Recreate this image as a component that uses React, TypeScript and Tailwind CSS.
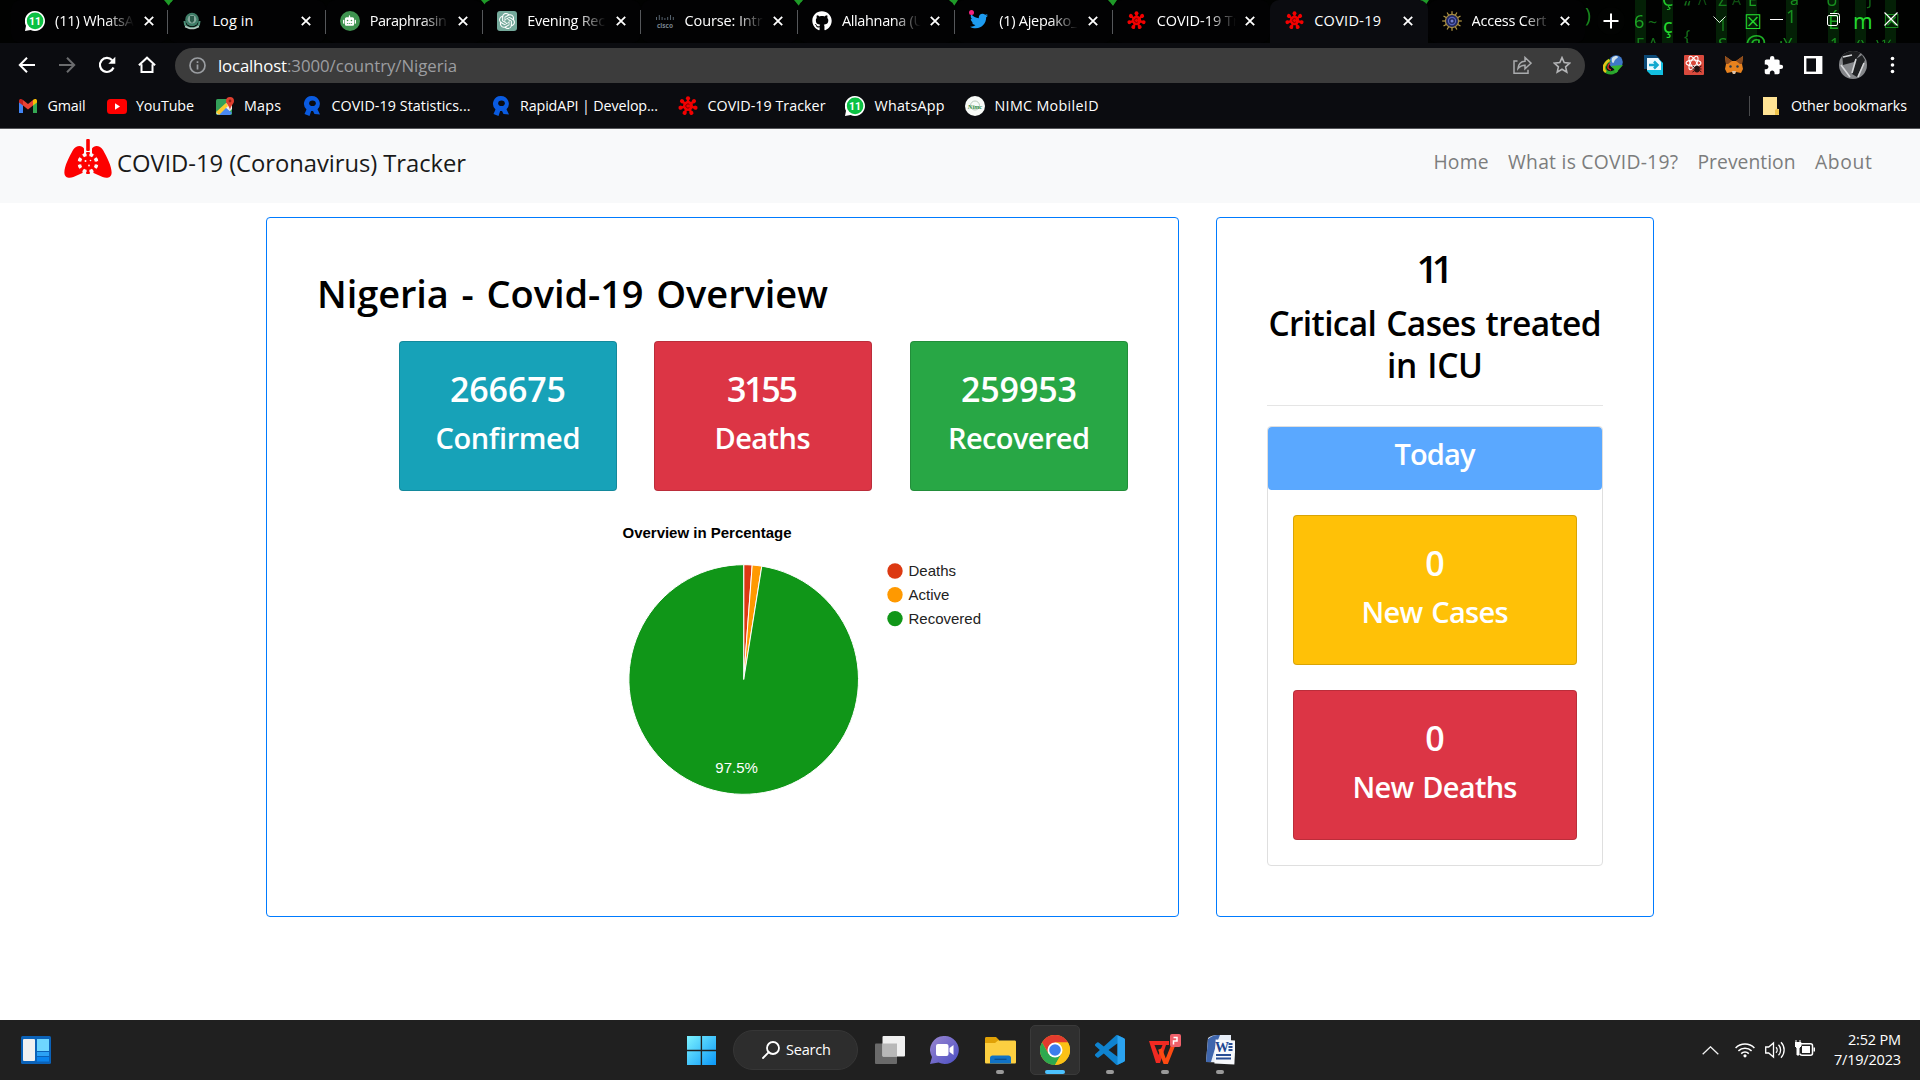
import { useLayoutEffect, useRef, useState } from "react";
import type { ReactNode } from "react";
import { FaGithub, FaTwitter, FaRobot } from "react-icons/fa";
import { SiOpenai } from "react-icons/si";
import { MdExtension } from "react-icons/md";

const UI = "font-['Open_Sans','Noto_Sans',sans-serif]";

/** Spaces its letters so that the text takes exactly `w` pixels. */
function Fit({ w, children }: { w: number; children: string }) {
  const ref = useRef<HTMLSpanElement>(null);
  const [ls, setLs] = useState(0);
  useLayoutEffect(() => {
    const el = ref.current;
    if (el && children.length > 1) {
      setLs((w - el.getBoundingClientRect().width) / (children.length - 1));
    }
  }, [w, children]);
  return (
    <span ref={ref} className="inline-block whitespace-nowrap" style={{ letterSpacing: ls, marginRight: -ls }}>
      {children}
    </span>
  );
}

/* ---------- icons ---------- */

function Virus({ size = 19 }: { size?: number }) {
  const arms = [0, 51, 103, 154, 206, 257, 309];
  return (
    <svg width={size} height={size} viewBox="-12 -12 24 24">
      {arms.map((a) => (
        <g key={a} transform={`rotate(${a})`}>
          <rect x="-1.4" y="-9" width="2.8" height="7" fill="#f20000" />
          <circle cx="0" cy="-9.2" r="2.5" fill="#f20000" />
        </g>
      ))}
      <circle r="6" fill="#f20000" />
      <path d="M1.8-1.6A2.5 2.5 0 1 0 1.800 1.600" fill="none" stroke="#6a0000" strokeWidth="1.1" />
    </svg>
  );
}

function WhatsBadge() {
  return (
    <svg width="20" height="20" viewBox="0 0 20 20">
      <path d="M10 0a10 10 0 1 1-4.4 19L0 20l1-5.300A10 10 0 0 1 10 0z" fill="#fff" />
      <circle cx="10.100" cy="9.900" r="8.300" fill="#0bc143" />
      <text x="10" y="13.800" textAnchor="middle" fontSize="10.500" fontWeight="700" fill="#fff" fontFamily="Roboto, sans-serif">11</text>
    </svg>
  );
}

function Crest() {
  return (
    <svg width="18" height="18" viewBox="0 0 18 18">
      <circle cx="9" cy="7.500" r="6.800" fill="#3f7d68" />
      <circle cx="9" cy="7.300" r="4.300" fill="#86a99d" />
      <path d="M7 4h4v5l-2 2-2-2z" fill="#2b5a4a" />
      <path d="M1.500 9c0 5 3 7 7.500 7s7.500-2 7.500-7" fill="none" stroke="#4d8f78" strokeWidth="2" />
      <path d="M2 14.500l5 2h4l5-2" fill="none" stroke="#b6c8c0" strokeWidth="1.500" />
    </svg>
  );
}

function Cisco() {
  const bars = [3, 5, 3, 2, 3, 5, 3];
  return (
    <svg width="20" height="16" viewBox="0 0 20 16">
      {bars.map((h, i) => (
        <rect key={i} x={1 + i * 2.8} y={7 - h} width="1" height={h} fill="#56636e" />
      ))}
      <text x="10" y="14.500" textAnchor="middle" fontSize="6.500" fontWeight="700" fill="#76828b" fontFamily="Open Sans, sans-serif">cisco</text>
    </svg>
  );
}

function Seal() {
  return (
    <svg width="20" height="20" viewBox="-10 -10 20 20">
      {[0, 30, 60, 90, 120, 150, 180, 210, 240, 270, 300, 330].map((a) => (
        <rect key={a} x="-.6" y="-9.800" width="1.200" height="4" fill="#b89a45" transform={`rotate(${a})`} />
      ))}
      <circle r="6.600" fill="#20275f" stroke="#a58b45" strokeWidth="1.200" />
      <circle r="3.600" fill="none" stroke="#5964b8" strokeWidth="1.200" />
      <circle r="1.500" fill="#7781cd" />
    </svg>
  );
}

function Cross() {
  return (
    <svg width="10" height="10" viewBox="0 0 10 10" className="shrink-0">
      <path d="M.8.8l8.400 8.400M9.200.8L.8 9.200" stroke="#fff" strokeWidth="1.800" />
    </svg>
  );
}

function Rapid() {
  return (
    <svg width="18" height="20" viewBox="0 0 18 20">
      <path d="M9 0a7.800 7.800 0 0 1 5.500 13.300L17 18.500l-5.500-.5-1.500-3H8.200L6.500 20 1.500 18l2-4.500A7.800 7.800 0 0 1 9 0z" fill="#0a5be0" />
      <ellipse cx="9.500" cy="7.300" rx="3.300" ry="2.800" fill="#0b0c10" />
    </svg>
  );
}

function Lungs() {
  return (
    <svg width="48" height="39" viewBox="0 0 48 39">
      <rect x="22.200" y="0" width="3.600" height="12" rx="1" fill="#fd0000" />
      <path d="M20 9.500C18 6 12 6 9 11 5 18 0 28 .4 34c.3 5 5 5.500 9 4l9-4 1.600-4z" fill="#fd0000" />
      <path d="M28 9.500C30 6 36 6 39 11c4 7 9 17 8.600 23-.3 5-5 5.500-9 4l-9-4-1.600-4z" fill="#fd0000" />
      <circle cx="24" cy="24" r="10.500" fill="#f8f9fa" />
      <rect x="20" y="33" width="8" height="4" fill="#f8f9fa" />
      {[0, 45, 90, 135, 180, 225, 270, 315].map((a) => (
        <g key={a} transform={`rotate(${a} 24 24)`}>
          <rect x="22.600" y="14" width="2.800" height="6" fill="#fd0000" />
          <rect x="22" y="13" width="4" height="2" rx="1" fill="#fd0000" />
        </g>
      ))}
      <circle cx="24" cy="24" r="7" fill="#fd0000" />
      <circle cx="21.500" cy="22" r="1" fill="#f8f9fa" />
      <circle cx="26.500" cy="21.500" r=".8" fill="#f8f9fa" />
      <circle cx="25" cy="26.500" r=".9" fill="#f8f9fa" />
    </svg>
  );
}

/* ---------- browser chrome ---------- */

const tabs: { icon: ReactNode; title: string; w: number; fade?: boolean; active?: boolean; sep?: boolean }[] = [
  { icon: <WhatsBadge />, title: "(11) WhatsA", w: 79, fade: true, sep: true },
  { icon: <Crest />, title: "Log in", w: 41, sep: true },
  {
    icon: (
      <span className="flex h-[20px] w-[20px] items-center justify-center rounded-full bg-[#3f9350]">
        <FaRobot size={13} color="#fff" />
      </span>
    ),
    title: "Paraphrasin",
    w: 77,
    fade: true,
    sep: true,
  },
  {
    icon: (
      <span className="flex h-[20px] w-[20px] items-center justify-center rounded-[3px] bg-[#74a99b]">
        <SiOpenai size={16} color="#fff" />
      </span>
    ),
    title: "Evening Rec",
    w: 78,
    fade: true,
    sep: true,
  },
  { icon: <Cisco />, title: "Course: Intr", w: 78, fade: true, sep: true },
  { icon: <FaGithub size={20} color="#fff" />, title: "Allahnana (U", w: 82, fade: true, sep: true },
  {
    icon: (
      <span className="relative flex">
        <FaTwitter size={18} color="#1d9bf0" />
        <span className="absolute -left-px -top-[2px] h-[5px] w-[5px] rounded-full bg-[#f4227e]" />
      </span>
    ),
    title: "(1) Ajepako_",
    w: 78,
    fade: true,
    sep: true,
  },
  { icon: <Virus />, title: "COVID-19 Tr", w: 82, fade: true },
  { icon: <Virus />, title: "COVID-19", w: 67, active: true },
  { icon: <Seal />, title: "Access Cert", w: 75, fade: true },
];

/* x, baseline, size, glyph, opacity */
const rain: [number, number, number, string, number][] = [
  [1585, 22, 20, ")", 0.6],
  [1634, 28, 18, "6", 0.7],
  [1648, 28, 16, "~", 0.5],
  [1663, 33, 20, "ç", 1],
  [1636, 50, 16, "Γ", 0.5],
  [1648, 50, 17, "Λ", 0.5],
  [1662, 6, 18, "Ç", 0.9],
  [1684, 14, 18, "“", 0.5],
  [1684, 42, 16, "{", 0.5],
  [1698, 5, 14, "Λ", 0.35],
  [1718, 6, 16, "Z", 0.5],
  [1718, 31, 16, "1", 0.5],
  [1718, 50, 17, "S", 0.6],
  [1732, 5, 14, "A", 0.35],
  [1748, 6, 16, "E", 0.7],
  [1744, 29, 20, "☒", 1],
  [1745, 52, 24, "@", 0.8],
  [1786, 23, 18, "1", 0.6],
  [1779, 50, 16, ":Y", 0.6],
  [1790, 5, 16, "ä", 0.6],
  [1826, 6, 16, "U", 0.6],
  [1828, 29, 20, "É", 0.7],
  [1830, 50, 16, "1", 0.6],
  [1853, 29, 21, "m", 1],
  [1856, 50, 15, "()", 0.6],
  [1868, 5, 14, "J", 0.5],
  [1883, 28, 19, "☒", 0.6],
  [1876, 50, 15, "\\¼", 0.6],
];

function MatrixBackdrop() {
  return (
    <svg className="absolute inset-0" width="1920" height="43" viewBox="0 0 1920 43">
      <rect width="1920" height="43" fill="#010201" />
      {[1635, 1662, 1716, 1746, 1786, 1828, 1855, 1885].map((x) => (
        <rect key={x} x={x} width="11" height="43" fill="#0b5a12" opacity=".35" />
      ))}
      {[168, 485, 798, 953, 1112, 1424].map((x) => (
        <path key={x} d={`M${x - 4} 0h9l-4 6z`} fill="#1f9a28" />
      ))}
      {rain.map(([x, y, s, t, o], i) => (
        <text key={i} x={x} y={y} fontSize={s} fill="#25d92f" opacity={o} fontFamily="Noto Sans, DejaVu Sans, sans-serif">
          {t}
        </text>
      ))}
    </svg>
  );
}

function TabStrip() {
  return (
    <div className="relative h-[43px] overflow-hidden">
      <MatrixBackdrop />
      <div className="relative flex h-full pl-[11px]">
        {tabs.map((t, i) => (
          <div
            key={i}
            className={
              t.active
                ? "relative flex h-full w-[157.4px] items-center rounded-t-[9px] bg-[#0b0c10] pb-[2px] pl-[14px]"
                : "relative flex h-full w-[157.4px] items-center rounded-[9px] bg-[#020203] pb-[2px] pl-[14px]"
            }
          >
            <span className="flex w-[20px] shrink-0 items-center justify-center">{t.icon}</span>
            <span
              className={
                t.fade
                  ? "ml-[10px] w-[79px] shrink-0 overflow-hidden text-[14.5px] leading-[22px] text-white [mask-image:linear-gradient(to_right,#000_65%,transparent_100%)]"
                  : "ml-[10px] w-[79px] shrink-0 overflow-hidden text-[14.5px] leading-[22px] text-white"
              }
            >
              <Fit w={t.w}>{t.title}</Fit>
            </span>
            <span className="ml-[9.500px] flex"><Cross /></span>
            {t.sep && <span className="absolute right-0 top-[10px] h-[24px] w-px bg-[#55575a]" />}
          </div>
        ))}
        <div className="ml-[12px] mt-[7px] flex h-[28px] w-[28px] items-center justify-center rounded-full bg-[#020302]">
          <svg width="16" height="16" viewBox="0 0 16 16"><path d="M8 .5v15M.5 8h15" stroke="#fff" strokeWidth="2" /></svg>
        </div>
        <div className="ml-auto flex h-[38px] items-center gap-[44px] pr-[22px]">
          <svg width="13" height="13" viewBox="0 0 13 13"><path d="M.5 3.500l6 6 6-6" fill="none" stroke="#dfe8df" /></svg>
          <svg width="13" height="13" viewBox="0 0 13 13"><path d="M0 6.500h13" stroke="#fff" /></svg>
          <svg width="13" height="13" viewBox="0 0 13 13" fill="none" stroke="#fff">
            <rect x=".5" y="2.500" width="10" height="10" rx="1.500" />
            <path d="M3 .5h7.500a2 2 0 0 1 2 2V10" />
          </svg>
          <svg width="14" height="14" viewBox="0 0 14 14"><path d="M.5.5l13 13M13.500.5l-13 13" stroke="#fff" strokeWidth="1.200" /></svg>
        </div>
      </div>
    </div>
  );
}

function Toolbar() {
  return (
    <div className="flex h-[44px] items-center">
      <div className="flex w-[175px] shrink-0 items-center gap-[22px] pl-[18px]">
        <svg width="18" height="18" viewBox="0 0 18 18" fill="none" stroke="#fff" strokeWidth="2"><path d="M17 9H2M9 1.800L1.800 9 9 16.200" /></svg>
        <svg width="18" height="18" viewBox="0 0 18 18" fill="none" stroke="#6b6c6e" strokeWidth="2"><path d="M1 9h15M9 1.800L16.200 9 9 16.200" /></svg>
        <svg width="18" height="18" viewBox="0 0 18 18" fill="none" stroke="#fff" strokeWidth="2.200"><path d="M15.500 11.500A7 7 0 1 1 14.200 4.300" /><path d="M17.300.8v7h-7z" fill="#fff" stroke="none" /></svg>
        <svg width="18" height="18" viewBox="0 0 18 18" fill="none" stroke="#fff" strokeWidth="2"><path d="M3.500 8.200V16h11V8.200M.9 9.300L9 1.700l8.100 7.600" /></svg>
      </div>
      <div className="flex h-[35px] w-[1410px] shrink-0 items-center rounded-full bg-[#3c3c3c] pl-[14px] pr-[14px]">
        <svg width="17" height="17" viewBox="0 0 17 17" fill="none" stroke="#9a9da1" strokeWidth="1.700">
          <circle cx="8.500" cy="8.500" r="7.500" />
          <path d="M8.500 7.500v5M8.500 4.200v1.900" />
        </svg>
        <div className="ml-[12px] mt-px flex text-[16.800px] leading-[24px]">
          <span className="text-white"><Fit w={69}>localhost</Fit></span>
          <span className="text-[#9c9ea1]"><Fit w={170}>:3000/country/Nigeria</Fit></span>
        </div>
        <div className="ml-auto flex items-center gap-[21px]">
          <svg width="19" height="18" viewBox="0 0 19 18" fill="none" stroke="#a9abad" strokeWidth="1.500">
            <path d="M4.500 5H1v12.200h14v-3.500" />
            <path d="M5 12.500c.5-5 3-7 7-7.200V1.500L18 7.200l-6 5.600V9.200c-3 0-5 .8-7 3.300z" />
          </svg>
          <svg width="18" height="18" viewBox="0 0 18 18" fill="none" stroke="#b4b5b7" strokeWidth="1.600">
            <path d="M9 1.600l2.200 5 5.500.5-4.100 3.700 1.200 5.400L9 13.300l-4.800 2.900 1.200-5.400L1.300 7.100l5.500-.5z" />
          </svg>
        </div>
      </div>
      <div className="ml-[18px] flex items-center gap-[20px]">
        <svg width="20" height="20" viewBox="0 0 20 20">
          <circle cx="13" cy="7" r="6.800" fill="#3f78c9" />
          <path d="M9 3c3-3 6-2 6-1s-3 2-4 5-3-1-2-4z" fill="#cfe0ea" />
          <path d="M7 5C2 8-1 14 4 17c4 2 8 0 10-2" fill="none" stroke="#2aa52c" strokeWidth="3.500" />
          <path d="M6.500 5C1 8-1 14 3 17" fill="none" stroke="#e8c216" strokeWidth="2.500" />
          <path d="M7 8c-3 3-3 6 1 7" fill="none" stroke="#d22b1f" strokeWidth="1.500" />
          <path d="M8 11l12-1-7 8-2-4z" fill="#35b531" />
        </svg>
        <svg className="ml-[1px]" width="20" height="20" viewBox="0 0 20 20">
          <path d="M0 0h12l4 4H6v10H0z" fill="#0b4a78" />
          <path d="M3 3h11l5 5v12H7l-4-4z" fill="#12bfe0" />
          <path d="M3 3h11l3 4v8H3z" fill="#eefaff" />
          <path d="M5 10h8M10 6.500l3.500 3.500-3.500 3.500" fill="none" stroke="#12a8cf" strokeWidth="2.500" />
        </svg>
        <svg width="20" height="20" viewBox="0 0 20 20">
          <rect width="20" height="20" rx="1" fill="#d94a3d" />
          <g fill="none" stroke="#fff" strokeWidth="1.100">
            <ellipse cx="9.500" cy="8" rx="7.500" ry="3" />
            <ellipse cx="9.500" cy="8" rx="7.500" ry="3" transform="rotate(60 9.500 8)" />
            <ellipse cx="9.500" cy="8" rx="7.500" ry="3" transform="rotate(120 9.500 8)" />
          </g>
          <ellipse cx="13" cy="14" rx="2.600" ry="3.600" fill="#221010" />
          <path d="M8.500 11l9 6M17.500 11l-9 6M8.500 14h9" stroke="#221010" />
        </svg>
        <svg width="20" height="20" viewBox="0 0 20 20">
          <path d="M1 1l7 5h4l7-5-1 8 1 5-2 4-5-1-1 2H9l-1-2-5 1-2-4 1-5z" fill="#e8821e" />
          <path d="M1 1l7 5-4 3-2 0zM19 1l-7 5 4 3 2 0z" fill="#8a4a1d" />
          <path d="M8 16h4l-1 3H9z" fill="#d8c2ae" />
          <circle cx="6.500" cy="11.500" r="1.200" fill="#2a3a4a" />
          <circle cx="13.500" cy="11.500" r="1.200" fill="#2a3a4a" />
        </svg>
        <MdExtension className="-ml-px" size={21} color="#fff" />
        <svg width="19" height="18" viewBox="0 0 19 18"><rect x="1.200" y="1.200" width="16" height="15.600" fill="none" stroke="#fff" strokeWidth="2.400" /><rect x="12" y="1" width="6" height="16" fill="#fff" /></svg>
        <svg className="-ml-[4px]" width="28" height="28" viewBox="0 0 28 28">
          <clipPath id="avatar"><circle cx="14" cy="14" r="14" /></clipPath>
          <g clipPath="url(#avatar)">
            <rect width="28" height="28" fill="#85878a" />
            <path d="M3 0h20l-8 11L4 14z" fill="#1c1d1f" />
            <path d="M17 8l6-4 3 5-8 17-5-3z" fill="#1f2123" />
            <path d="M4 6l9-2M2 14l9 12M17 8l-4 14M25 12l-6 14" stroke="#d4d6d8" strokeWidth="1.600" />
          </g>
        </svg>
        <svg className="ml-[3px]" width="5" height="18" viewBox="0 0 5 18" fill="#fff"><circle cx="2.500" cy="2.500" r="1.800" /><circle cx="2.500" cy="9" r="1.800" /><circle cx="2.500" cy="15.500" r="1.800" /></svg>
      </div>
    </div>
  );
}

const bookmarks: { icon: ReactNode; title: string; w: number; box: string }[] = [
  {
    icon: (
      <svg width="18" height="14" viewBox="0 0 18 14">
        <path d="M0 2v12h4V5z" fill="#4285f4" />
        <path d="M18 2v12h-4V5z" fill="#34a853" />
        <path d="M4 1l5 4 5-4v5.500l-5 4-5-4z" fill="#ea4335" />
        <path d="M0 1.500C0 0 2.500-.6 4 1v5.500L0 3.500z" fill="#c5221f" />
        <path d="M18 1.500C18 0 15.500-.6 14 1v5.500l4-3z" fill="#fbbc04" />
      </svg>
    ),
    title: "Gmail", w: 38, box: "w-[88.500px]",
  },
  {
    icon: (
      <svg width="20" height="15" viewBox="0 0 20 15"><rect width="20" height="15" rx="3.500" fill="#f00" /><path d="M8 4.300l5 3.200-5 3.200z" fill="#fff" /></svg>
    ),
    title: "YouTube", w: 58, box: "w-[108px]",
  },
  {
    icon: (
      <svg width="18" height="18" viewBox="0 0 18 18">
        <rect y="2" width="16" height="16" rx="1.500" fill="#34a05a" />
        <path d="M0 16L14 3h2v9l-6 6H2z" fill="#f1f1ea" />
        <path d="M9 10l-8 8h13l2-2z" fill="#4a89f3" />
        <path d="M0 15l10-9 2 3-9 9z" fill="#fbcb2f" />
        <path d="M14 0a4 4 0 0 1 4 4c0 3-3 4-4 9-1-5-4-6-4-9a4 4 0 0 1 4-4z" fill="#e0402f" />
        <circle cx="14" cy="4" r="1.400" fill="#8c1d14" />
      </svg>
    ),
    title: "Maps", w: 37, box: "w-[87.500px]",
  },
  { icon: <Rapid />, title: "COVID-19 Statistics...", w: 139, box: "w-[188.500px]" },
  { icon: <Rapid />, title: "RapidAPI | Develop...", w: 138, box: "w-[187.500px]" },
  { icon: <Virus size={20} />, title: "COVID-19 Tracker", w: 118, box: "w-[167px]" },
  { icon: <WhatsBadge />, title: "WhatsApp", w: 70, box: "w-[120px]" },
  {
    icon: (
      <svg width="20" height="20" viewBox="0 0 20 20">
        <circle cx="10" cy="10" r="10" fill="#f8fbf8" />
        <circle cx="10" cy="9.500" r="4.500" fill="none" stroke="#b9c9bb" />
        <text x="10" y="12.500" textAnchor="middle" fontSize="6.500" fontWeight="700" fontStyle="italic" fill="#2c8a45" fontFamily="Liberation Serif, serif">Nimc</text>
      </svg>
    ),
    title: "NIMC MobileID", w: 104, box: "w-[140px]",
  },
];

function BookmarksBar() {
  return (
    <div className="flex h-[40px] items-center pb-[2px] pl-[18px] pr-[13px] text-[14.300px] leading-[22px] text-white">
      {bookmarks.map((b) => (
        <div key={b.title} className={`${b.box} flex shrink-0 items-center`}>
          <span className="mr-[9.500px] flex w-[20px] justify-center">{b.icon}</span>
          <Fit w={b.w}>{b.title}</Fit>
        </div>
      ))}
      <div className="ml-auto flex items-center">
        <span className="h-[20px] w-px bg-[#4a4b4d]" />
        <svg className="ml-[13px] mr-[12px]" width="16" height="18" viewBox="0 0 16 18">
          <path d="M0 0h14v12h2v6H0z" fill="#ffe394" />
          <path d="M12 18v-5l2-1.500 2 1.500v4l-1 1z" fill="#f0c54c" />
        </svg>
        <Fit w={116}>Other bookmarks</Fit>
      </div>
    </div>
  );
}

/* ---------- page ---------- */

function Stat({ value, vw, label, lw, tone }: { value: string; vw: number; label: string; lw: number; tone: string }) {
  return (
    <div className={`${tone} h-[150px] rounded-[4px] border border-black/15 bg-clip-border pt-[26px] text-center font-semibold text-white`}>
      <div className="text-[34px] leading-[42px]"><Fit w={vw}>{value}</Fit></div>
      <div className="mt-[9px] text-[29px] leading-[37px] [word-spacing:2px]"><Fit w={lw}>{label}</Fit></div>
    </div>
  );
}

const slices = [
  { name: "Deaths", color: "#dc3912", share: 0.0118 },
  { name: "Active", color: "#ff9900", share: 0.0134 },
  { name: "Recovered", color: "#109618", share: 0.9748 },
];

function PieChart() {
  const cx = 143.7;
  const cy = 179.5;
  const r = 114.8;
  let turn = 0;
  const at = (t: number) => `${cx + r * Math.sin(2 * Math.PI * t)} ${cy - r * Math.cos(2 * Math.PI * t)}`;
  return (
    <svg width="420" height="320" viewBox="0 0 420 320" fontFamily="Liberation Sans, Arial, sans-serif" fontSize="15">
      <text x="22.500" y="38" fontWeight="700" fill="#000" textLength="169">Overview in Percentage</text>
      {slices.map((s) => {
        const start = turn;
        turn += s.share;
        return (
          <path
            key={s.name}
            d={`M${cx} ${cy}L${at(start)}A${r} ${r} 0 ${s.share > 0.5 ? 1 : 0} 1 ${at(turn)}Z`}
            fill={s.color}
            stroke="#fff"
          />
        );
      })}
      <text x="115.300" y="273" fill="#fff">97.5%</text>
      {slices.map((s, i) => (
        <g key={s.name}>
          <circle cx="295" cy={71 + i * 23.8} r="7.700" fill={s.color} />
          <text x="308.500" y={76 + i * 24} fill="#222">{s.name}</text>
        </g>
      ))}
    </svg>
  );
}

function Page() {
  return (
    <div className="h-[891px] bg-white">
      <nav className="flex h-[74px] items-start bg-[#f8f9fa] pl-[64px] pr-[48px] pt-[9.500px]">
        <Lungs />
        <div className="ml-[5px] mt-[6px] text-[23.800px] leading-[36px] text-[#1a1a1a]">
          <Fit w={349}>COVID-19 (Coronavirus) Tracker</Fit>
        </div>
        <div className="ml-auto mt-[8px] flex gap-[19.500px] text-[19.300px] font-medium leading-[30px] text-[#7c7d7d]">
          <Fit w={55}>Home</Fit>
          <Fit w={170}>What is COVID-19?</Fit>
          <Fit w={98}>Prevention</Fit>
          <Fit w={57}>About</Fit>
        </div>
      </nav>
      <main className="flex gap-[37px] pl-[266px] pt-[14px]">
        <section className="h-[700px] w-[913px] rounded-[4px] border border-[#007bff] pt-[51px]">
          <h1 className="ml-[50px] text-[38px] font-semibold leading-[48px] text-black [word-spacing:3px]">
            <Fit w={511}>Nigeria - Covid-19 Overview</Fit>
          </h1>
          <div className="ml-[132px] mt-[24px] grid w-[729px] grid-cols-[218px_218px_218px] justify-between">
            <Stat value="266675" vw={116} label="Confirmed" lw={145} tone="bg-[#17a2b8]" />
            <div className="-ml-[1px] mr-[1px]">
              <Stat value="3155" vw={71} label="Deaths" lw={96} tone="bg-[#dc3545]" />
            </div>
            <Stat value="259953" vw={116} label="Recovered" lw={142} tone="bg-[#28a745]" />
          </div>
          <div className="ml-[333px] mt-[9px]"><PieChart /></div>
        </section>
        <section className="h-[700px] w-[438px] rounded-[4px] border border-[#007bff] px-[50px] pt-[26px] text-center font-semibold text-black">
          <div className="text-[38px] leading-[48px]"><Fit w={37}>11</Fit></div>
          <h2 className="mt-[10px] text-[33.500px] leading-[42px] [word-spacing:2px]">
            <Fit w={333}>Critical Cases treated</Fit>
            <br />
            <Fit w={96}>in ICU</Fit>
          </h2>
          <hr className="mt-[19px] border-[#e5e5e5]" />
          <div className="mt-[20px] h-[440px] rounded-[4px] border border-[#dfdfdf]">
            <div className="h-[63px] rounded-[4px] bg-[#5aa8ff] pt-[8px] text-[29px] leading-[37px] text-white">
              <Fit w={81}>Today</Fit>
            </div>
            <div className="flex flex-col gap-[25px] p-[25px]">
              <Stat value="0" vw={20} label="New Cases" lw={147} tone="bg-[#ffc107]" />
              <Stat value="0" vw={20} label="New Deaths" lw={165} tone="bg-[#dc3545]" />
            </div>
          </div>
        </section>
      </main>
    </div>
  );
}

/* ---------- taskbar ---------- */

function TaskApp({ children, active }: { children: ReactNode; active?: boolean }) {
  return (
    <div className="flex h-full w-[55px] flex-col items-center pt-[5px]">
      <div
        className={
          active
            ? "flex h-[50px] w-[50px] flex-col items-center rounded-[5px] border border-[#3a3a3a] bg-[#2f2f2f] pt-[8px]"
            : "flex h-[50px] w-[50px] flex-col items-center pt-[9px]"
        }
      >
        <div className="flex h-[32px] items-center">{children}</div>
        <span className={active ? "mt-[4px] h-[4px] w-[20px] shrink-0 rounded-full bg-[#4cc2ff]" : "mt-[4px] h-[4px] w-[8px] shrink-0 rounded-full bg-[#9a9a9a]"} />
      </div>
    </div>
  );
}

function Taskbar() {
  return (
    <div className="flex h-[60px] items-start bg-[#202020]">
      <svg className="ml-[21px] mt-[16px] shrink-0" width="30" height="28" viewBox="0 0 30 28">
        <rect width="30" height="28" rx="1.500" fill="#0b62b8" />
        <rect x="2" y="3" width="12" height="22" rx="1" fill="#f0f0f0" />
        <rect x="16" y="3" width="12" height="12" fill="#6fd6ff" />
        <rect x="16" y="16" width="12" height="4" fill="#2ca2f5" />
        <rect x="16" y="21" width="12" height="4.500" fill="#0a84ee" />
      </svg>
      <svg className="ml-[636px] mt-[16px] shrink-0" width="29" height="29" viewBox="0 0 30 29" preserveAspectRatio="none">
        <defs>
          <linearGradient id="win" gradientUnits="userSpaceOnUse" x1="0" y1="0" x2="30" y2="29">
            <stop offset="0" stopColor="#7df3ff" />
            <stop offset="1" stopColor="#0a97f8" />
          </linearGradient>
        </defs>
        <path d="M0 0h14.200v13.700H0zM15.600 0H30v13.700H15.600zM0 15.200h14.200V29H0zM15.600 15.200H30V29H15.600z" fill="url(#win)" />
      </svg>
      <div className="ml-[17px] mt-[10px] flex h-[40px] w-[125px] shrink-0 items-center rounded-full border border-[#363636] bg-[#2d2d2d] pl-[28px] text-[14.500px] leading-[22px] text-white">
        <svg width="18" height="18" viewBox="0 0 18 18" fill="none" stroke="#fff" strokeWidth="1.800"><circle cx="11" cy="7" r="6" /><path d="M6.800 11.200L1 17" strokeLinecap="round" /></svg>
        <span className="ml-[6px]"><Fit w={45}>Search</Fit></span>
      </div>
      <svg className="ml-[17px] mt-[16px] shrink-0" width="30" height="28" viewBox="0 0 30 28">
        <rect x="0" y="7.500" width="22" height="20.500" rx="1" fill="#6a6a6a" />
        <rect x="7.500" y="0" width="22.500" height="20.500" rx="1" fill="#f0f0f0" />
        <rect x="7.500" y="7.500" width="14.500" height="13" fill="#b8b8b8" />
      </svg>
      <svg className="ml-[25px] mt-[16px] shrink-0" width="29" height="29" viewBox="0 0 29 29">
        <defs>
          <linearGradient id="chat" x1="0" y1="0" x2="1" y2="1"><stop offset="0" stopColor="#9a86d0" /><stop offset="1" stopColor="#4b4fc4" /></linearGradient>
        </defs>
        <path d="M14.500 0a14 14 0 1 1-6 26.500L0 28l2-7A14 14 0 0 1 14.500 0z" fill="url(#chat)" />
        <rect x="6" y="8" width="12.500" height="12" rx="2" fill="#fff" />
        <path d="M19.500 12l4-3v10l-4-3z" fill="#fff" />
      </svg>
      <div className="ml-[13.500px] flex h-full shrink-0">
        <TaskApp>
          <svg width="31" height="27" viewBox="0 0 31 27">
            <path d="M0 1.500C0 .5.500 0 1.500 0H11l3 3v5H0z" fill="#e0a106" />
            <path d="M0 6h10l3-2.500h16.500c1 0 1.500.5 1.500 1.500v20c0 1-.5 1.500-1.500 1.500h-28C.5 26.500 0 26 0 25z" fill="#fccf41" />
            <path d="M5 26.500V21c0-1.500 1-2.500 2.500-2.500h16c1.500 0 2.500 1 2.500 2.500v5.500z" fill="#1073c6" />
            <path d="M9.500 22.300h12" stroke="#0a4f90" strokeWidth="1.300" />
          </svg>
        </TaskApp>
        <TaskApp active>
          <svg width="30" height="30" viewBox="-15 -15 30 30">
            <circle r="15" fill="#fbc116" />
            <path d="M-13-7.500A15 15 0 0 1 13-7.500L0-7.500-6.500 3.750z" fill="#e33b2e" />
            <path d="M-13-7.500A15 15 0 0 0 0 15L6.500 3.750-6.500 3.750z" fill="#2da94f" />
            <path d="M13-7.500A15 15 0 0 1 0 15L6.500 3.750 0-7.500z" fill="#fbc116" />
            <circle r="7.500" fill="#fff" />
            <circle r="5.800" fill="#3b7ded" />
          </svg>
        </TaskApp>
        <TaskApp>
          <svg width="30" height="30" viewBox="0 0 24 24">
            <path d="M23.150 2.587L18.210.210a1.494 1.494 0 0 0-1.705.290l-9.460 8.630-4.120-3.128a.999.999 0 0 0-1.276.057L.327 7.261A1 1 0 0 0 .326 8.740L3.899 12 .326 15.260a1 1 0 0 0 .001 1.479L1.650 17.940a.999.999 0 0 0 1.276.057l4.120-3.128 9.460 8.630a1.492 1.492 0 0 0 1.704.290l4.942-2.377A1.500 1.500 0 0 0 24 20.060V3.939a1.500 1.500 0 0 0-.850-1.352zm-5.146 14.861L10.826 12l7.178-5.448v10.896z" fill="#0f83cf" />
            <path d="M18 .2l5.200 2.400c.5.300.8.800.8 1.340V20.060c0 .6-.3 1.100-.8 1.340L18 23.800z" fill="#2ba3f0" />
          </svg>
        </TaskApp>
        <TaskApp>
          <svg width="32" height="32" viewBox="0 0 32 32">
            <path d="M0 7h20v4h-3l-6 18H7z" fill="#f02a22" />
            <path d="M5.500 11h8l-4 10z" fill="#202020" />
            <path d="M11 15l5 13 1.500 0 8-20" fill="none" stroke="#fc4a12" strokeWidth="4" />
            <rect x="21" y="0" width="11" height="13" rx="2" fill="#f0606a" />
            <path d="M24.500 10.500V7h3.500V3.500h-3.500" fill="none" stroke="#fff" strokeWidth="1.500" />
          </svg>
        </TaskApp>
        <TaskApp>
          <svg width="29" height="30" viewBox="0 0 29 30">
            <path d="M2 3C4 1 8 0 12 0h13v28L0 27z" fill="#e6edf7" />
            <path d="M2 4c5-4 8-4 12-4l-4 10L5 27H0z" fill="#3f66ad" />
            <rect x="9" y="5" width="20" height="24" fill="#f7f9fc" transform="rotate(3 19 17)" />
            <text x="9" y="16.500" fontSize="14" fontWeight="700" fill="#1f4690" fontFamily="Liberation Serif, serif">W</text>
            <path d="M22.500 9h4M22.500 12h4M22.500 15h4M10 20h15M10 23.500h15" stroke="#274d94" strokeWidth="1.800" />
          </svg>
        </TaskApp>
      </div>
      <div className="ml-auto flex h-[60px] shrink-0 items-center pr-[19px]">
        <svg width="17" height="9" viewBox="0 0 17 9"><path d="M.7 8.300l7.800-7.500 7.800 7.500" fill="none" stroke="#f2f2f2" strokeWidth="1.300" /></svg>
        <svg className="ml-[16px]" width="20" height="16" viewBox="0 0 20 16" fill="none" stroke="#fff" strokeWidth="1.500">
          <path d="M.6 6a13.300 13.300 0 0 1 18.800 0M3.400 8.900a9.400 9.400 0 0 1 13.200 0M6.200 11.600a5.400 5.400 0 0 1 7.600 0" />
          <circle cx="10" cy="13.800" r="1.600" fill="#fff" stroke="none" />
        </svg>
        <svg className="ml-[10px]" width="21" height="18" viewBox="0 0 21 18" fill="none" stroke="#fff" strokeWidth="1.300">
          <path d="M.7 6h3L8.500 2v14l-4.800-4h-3zM11 6.200a4 4 0 0 1 0 5.600M13.500 3.800a7.500 7.500 0 0 1 0 10.400M16 1.300a11 11 0 0 1 0 15.400" />
        </svg>
        <svg className="-mt-[4px] ml-[9px]" width="20" height="17" viewBox="0 0 20 17">
          <path d="M6 3.800h9.500a2 2 0 0 1 2 2v7.400a2 2 0 0 1-2 2H7a2 2 0 0 1-2-1.500" fill="none" stroke="#fff" strokeWidth="1.500" />
          <rect x="7" y="6" width="8" height="7" fill="#fff" />
          <path d="M18.500 7.500v4h1.500v-4z" fill="#fff" />
          <path d="M0 2.500h6V6L4 8v7H2V8L0 6zM1 0v2.500M5 0v2.500" fill="#fff" stroke="#fff" strokeWidth="1" />
        </svg>
        <div className="ml-[19px] flex flex-col items-end text-[14.500px] leading-[20px] text-white">
          <Fit w={53}>2:52 PM</Fit>
          <Fit w={67}>7/19/2023</Fit>
        </div>
      </div>
    </div>
  );
}

export default function App() {
  return (
    <div className={`${UI} h-[1080px] w-[1920px] overflow-hidden bg-white`}>
      <header className="h-[129px] border-b border-[#55565a] bg-[#0b0c10]">
        <TabStrip />
        <Toolbar />
        <BookmarksBar />
      </header>
      <Page />
      <Taskbar />
    </div>
  );
}
